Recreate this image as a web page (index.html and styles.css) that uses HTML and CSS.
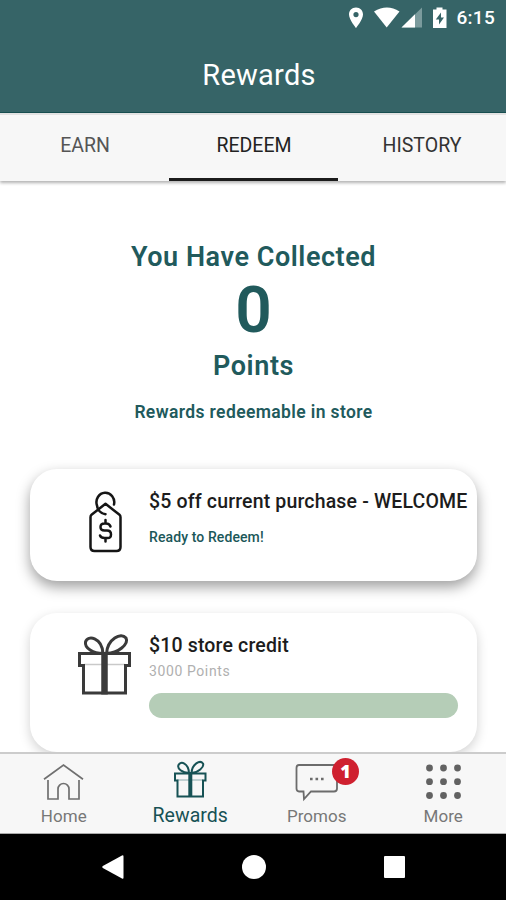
FILE: index.html
```html
<!DOCTYPE html>
<html lang="en">
<head>
<meta charset="utf-8">
<title>Rewards</title>
<link rel="stylesheet" href="styles.css">
</head>
<body>
<div class="app">
  <header class="header">
    <div class="status">
      <svg class="status-icons" viewBox="0 0 102 24" width="102" height="24">
        <path fill="#fff" fill-rule="evenodd" d="M8 1.500C3.800 1.500 1 4.500 1 8.500C1 13.500 8 22 8 22S15 13.500 15 8.500C15 4.500 12.200 1.500 8 1.500ZM8 6A2.600 2.600 0 1 1 8 11.200A2.600 2.600 0 1 1 8 6Z"/>
        <path fill="#fff" d="M26 5.500Q39 -2.500 51.500 5.500L38.700 21.500Z"/>
        <path fill="#7b9b9d" d="M53.500 21.500L74 1.500V21.500Z"/>
        <path fill="#fff" d="M53.500 21.500L67 8.300V21.500Z"/>
        <path fill="#fff" fill-rule="evenodd" d="M85 3.500H88.500V1.500H94.500V3.500H98.500V22H85ZM93 6.500L87.800 13.500H91V18.500L96 11.500H93Z"/>
      </svg>
      <span class="clock">6:15</span>
    </div>
    <h1 class="title">Rewards</h1>
  </header>
  <nav class="tabs">
    <span class="tab earn">EARN</span>
    <span class="tab active">REDEEM</span>
    <span class="tab">HISTORY</span>
  </nav>
  <main class="content">
    <section class="summary">
      <p class="lead">You Have Collected</p>
      <p class="count">0</p>
      <p class="points">Points</p>
      <p class="note">Rewards redeemable in store</p>
    </section>
    <article class="card offer">
      <svg class="card-icon" viewBox="0 0 56 64" width="56" height="64" fill="none" stroke="#151515" stroke-width="2.500" stroke-linecap="round" stroke-linejoin="round">
        <path d="M29.500 11.800L15.500 22.800Q14.500 23.600 14.500 25.300V55Q14.500 59 18.500 59H40.500Q44.500 59 44.500 55V25.300Q44.500 23.600 43.500 22.800Z"/>
        <path d="M38 12.500A8.900 9.500 0 1 0 21 13.500C21.500 17.500 24.500 21.500 29.500 22.200"/>
        <path d="M34.500 34.500Q33.500 31.500 30 31.500H28.500Q24.500 31.500 24.500 35T28.500 38.500H31Q35 38.500 35 42.500T31 46H28.500Q25 46 24 43.500M29.500 28V31.500M29.500 46V49.500"/>
      </svg>
      <div class="card-body">
        <h2 class="card-title">$5 off current purchase - WELCOME</h2>
        <p class="ready">Ready to Redeem!</p>
      </div>
    </article>
    <article class="card credit">
      <svg class="card-icon" viewBox="0 0 56 64" width="56" height="64" fill="none" stroke="#3a3a3a" stroke-width="3">
        <path stroke="#c9c9c9" stroke-width="1.500" d="M8 20.500H49"/>
        <path d="M3.500 9.500H53.500V21.500H49.500V49H7.500V21.500H3.500Z"/>
        <path stroke-width="6.500" d="M28.500 8V50.500"/>
        <path d="M27 9.500C17 9.500 8.500 4 9.500 -2C11.500 -9.500 26 -6.500 27 9.500ZM30.500 9.500C42 9.500 53 0 50 -6C45 -12 31.500 -5 30.500 9.500Z"/>
      </svg>
      <div class="card-body">
        <h2 class="card-title small">$10 store credit</h2>
        <p class="cost">3000 Points</p>
        <div class="progress"></div>
      </div>
    </article>
  </main>
  <nav class="bottom-nav">
    <div class="item">
      <svg viewBox="0 0 44 42" width="44" height="42" fill="none" stroke="#707070" stroke-width="1.700">
        <path d="M3 21.300L22.500 7L42 21.300M7 22V41H17V31A5.500 5.500 0 0 1 28 31V41H38V22"/>
      </svg>
      <span class="label">Home</span>
    </div>
    <div class="item selected">
      <svg viewBox="0 0 44 42" width="44" height="42" fill="none" stroke="#175255" stroke-width="2">
        <path stroke="#8bacae" stroke-width="1" d="M9 22H35"/>
        <path d="M7 15.500H37.500V22.500H35V38.500H9.500V22.500H7Z"/>
        <path stroke-width="4" d="M22.300 14V39"/>
        <path d="M21 15C14 15 9 10.500 10.500 7C12.500 2.500 20.500 5 21 15ZM23.500 15C30 15 36.500 9 35 5.500C32 1.500 24 6 23.500 15Z"/>
      </svg>
      <span class="label">Rewards</span>
    </div>
    <div class="item promos">
      <svg viewBox="0 0 44 42" width="44" height="42" fill="none" stroke="#6c6c6c" stroke-width="1.800">
        <path d="M5 7H40Q43 7 43 10V30.500Q43 33.500 40 33.500H17L10 41L9.500 33.500H5Q2.500 33.500 2.500 30.500V10Q2.500 7 5 7Z"/>
        <path stroke-width="2.600" stroke-dasharray="2.600 2.900" d="M16 21H30"/>
      </svg>
      <span class="badge">1</span>
      <span class="label">Promos</span>
    </div>
    <div class="item more">
      <svg viewBox="0 0 44 42" width="44" height="42" fill="#626262">
        <circle cx="8.500" cy="10" r="3.400"/><circle cx="22.500" cy="10" r="3.400"/><circle cx="36.500" cy="10" r="3.400"/>
        <circle cx="8.500" cy="23.700" r="3.400"/><circle cx="22.500" cy="23.700" r="3.400"/><circle cx="36.500" cy="23.700" r="3.400"/>
        <circle cx="8.500" cy="37.500" r="3.400"/><circle cx="22.500" cy="37.500" r="3.400"/><circle cx="36.500" cy="37.500" r="3.400"/>
      </svg>
      <span class="label">More</span>
    </div>
  </nav>
  <footer class="system-nav">
    <svg viewBox="0 0 24 26" width="24" height="26" fill="#fff"><path d="M21 1.500Q22.500 .7 22.500 2.500V23.500Q22.500 25.300 21 24.500L1.800 14Q.5 13 1.800 12Z"/></svg>
    <span class="home-dot"></span>
    <span class="recent"></span>
  </footer>
</div>
</body>
</html>
```
FILE: styles.css
```css
* { box-sizing: border-box; margin: 0; padding: 0; }
body { font-family: Roboto, "Liberation Sans", sans-serif; background: #fff; }
svg { display: block; overflow: visible; flex: none; }
.app { width: 506px; height: 900px; display: flex; flex-direction: column; overflow: hidden; }

.header { height: 113px; flex: none; background: #366467; border-bottom: 1px solid #195052; color: #fff; }
.status { height: 37px; padding: 6px 11px 0 0; display: flex; justify-content: flex-end; }
.status-icons { margin-right: 6px; }
.clock { font-size: 19px; line-height: 24px; font-weight: 500; letter-spacing: .3px; }
.title { font-size: 29px; line-height: 34px; margin-top: 21px; padding-left: 12px; font-weight: 400; letter-spacing: .25px; text-align: center; }

.tabs { height: 68px; flex: none; display: flex; background: #f7f7f7; border-top: 2px solid #e2e2e2; box-shadow: 0 2px 3px rgba(0,0,0,.3); position: relative; z-index: 1; }
.tab { flex: 1; text-align: center; font-size: 19.500px; line-height: 62px; color: #333; border-bottom: 3px solid transparent; }
.tab.earn { color: #555; padding-left: 1px; }
.tab.active { border-bottom-color: #1c1c1c; color: #222; padding-left: 1px; }

.content { height: 571px; flex: none; overflow: hidden; padding: 0 29px 0 30px; }
.summary { height: 288px; padding-top: 58px; text-align: center; color: #215a5c; font-weight: 600; }
.lead { font-size: 27px; line-height: 36px; letter-spacing: .55px; }
.count { font-size: 64px; line-height: 70px; height: 68px; padding-top: 1px; font-weight: 600; }
.points { font-size: 27px; line-height: 36px; margin-top: 5px; letter-spacing: .6px; }
.note { font-size: 17.500px; line-height: 24px; margin-top: 16px; letter-spacing: .38px; }

.card { height: 112px; display: flex; padding-left: 46px; border-radius: 27px; background: #fff; }
.offer { box-shadow: 0 6px 14px rgba(0,0,0,.38); }
.credit { height: 139px; margin-top: 32px; box-shadow: 0 4px 12px rgba(0,0,0,.18); }
.card-icon { margin-top: 23px; }
.credit .card-icon { margin-top: 31px; }
.card-body { margin-left: 17px; padding-top: 20px; white-space: nowrap; }
.card-title { font-size: 19.500px; line-height: 25px; font-weight: 500; color: #1c1c1c; letter-spacing: .16px; }
.ready { font-size: 14px; line-height: 20px; margin-top: 13px; font-weight: 500; color: #1b5759; letter-spacing: .1px; }
.cost { font-size: 14px; line-height: 20px; margin-top: 3px; color: #b0b0b0; letter-spacing: .6px; }
.progress { width: 309px; height: 25px; margin-top: 12px; border-radius: 13px; background: #b5cdb7; }

.bottom-nav { height: 82px; flex: none; display: flex; background: #f7f7f7; border-top: 2px solid #ccc; border-bottom: 1px solid #aaa; position: relative; z-index: 1; }
.item { flex: 1; display: flex; flex-direction: column; align-items: center; position: relative; color: #777; }
.item svg { margin-top: 4px; }
.label { font-size: 17px; line-height: 22px; margin-top: 5px; padding-left: 1px; letter-spacing: .05px; }
.selected { color: #175255; }
.selected .label { font-size: 19.500px; }
.badge { position: absolute; left: 79px; top: 4px; width: 27px; height: 27px; border-radius: 50%; background: #cf202f; color: #fff; font-family: "Open Sans", Roboto, sans-serif; font-size: 18px; line-height: 26px; font-weight: 800; text-align: center; }
.system-nav { height: 66px; flex: none; background: #000; display: flex; align-items: center; padding-left: 101px; }
.home-dot { width: 24px; height: 24px; border-radius: 50%; background: #fff; margin-left: 117px; }
.recent { width: 21px; height: 22px; border-radius: 1px; background: #fff; margin-left: 118px; }
```
